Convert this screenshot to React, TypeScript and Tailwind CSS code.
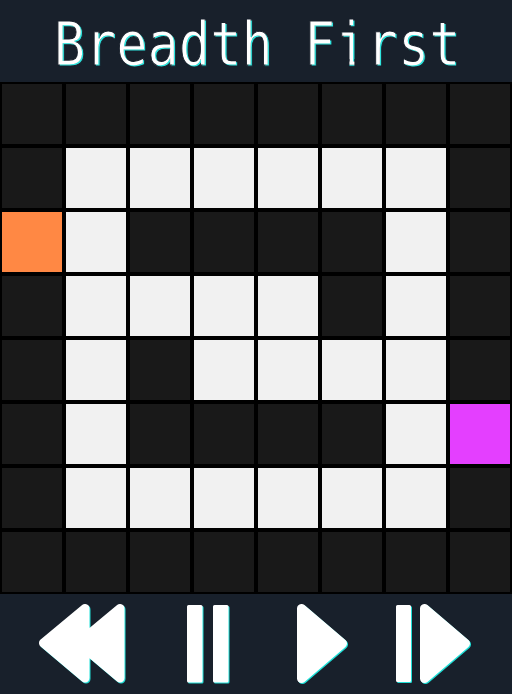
import React from "react";

const MAZE = [
  "########",
  "#......#",
  "S.####.#",
  "#....#.#",
  "#.#....#",
  "#.####.E",
  "#......#",
  "########",
];

const CELL_COLORS: Record<string, string> = {
  "#": "bg-[#191919]",
  ".": "bg-[#f1f1f1]",
  S: "bg-[#ff8844]",
  E: "bg-[#e43fff]",
};

const GLOW = "[filter:drop-shadow(1px_1px_0.5px_#1fe0d8)]";

// Thin cyan lettering with a white copy one pixel up and to the left.
const GLYPHS =
  "relative inline-block text-[#2fe6e0] after:absolute after:-top-px after:-left-[1.5px] after:text-white after:mix-blend-lighten after:content-[attr(data-text)]";

function Title() {
  return (
    <header className="flex h-[82px] items-center justify-center overflow-hidden">
      <h1 className="flex scale-x-[0.852] whitespace-pre pt-[8px] pl-[5px] font-['DejaVu_Sans_Mono',monospace] text-[61px] leading-[70px] [-webkit-text-stroke:1.1px_#18202b]">
        <span className={GLYPHS} data-text="Breadth F">Breadth F</span>
        <span
          className={`${GLYPHS} [clip-path:polygon(0_0,100%_0,100%_70%,57%_70%,57%_100%,41%_100%,41%_70%,0_70%)]`}
          data-text="i"
        >
          i
        </span>
        <span className={GLYPHS} data-text="rst">rst</span>
      </h1>
    </header>
  );
}

function Icon({ width, label, children }: { width: number; label: string; children: React.ReactNode }) {
  return (
    <button aria-label={label} className="block shrink-0">
      <svg
        width={width}
        height={80}
        viewBox={`0 0 ${width} 80`}
        className={`overflow-visible ${GLOW}`}
        fill="white"
        stroke="white"
        strokeLinejoin="round"
      >
        {children}
      </svg>
    </button>
  );
}

export default function App() {
  return (
    <main className="h-[694px] w-[512px] overflow-hidden bg-[#18202b]">
      <Title />
      <section className="grid grid-cols-8 bg-black">
        {MAZE.flatMap((row, y) =>
          row.split("").map((cell, x) => (
            <div key={`${x}-${y}`} className={`size-16 border-2 border-black ${CELL_COLORS[cell]}`} />
          )),
        )}
      </section>
      <footer className="flex pt-[10px] pl-[39px]">
        <Icon width={86} label="Rewind">
          <path strokeWidth={9} d="M46 4.5V74L4.5 39ZM81 4.5V74L39.5 39Z" />
        </Icon>
        <div className="ml-[62px]">
          <Icon width={42} label="Pause">
            <path strokeWidth={3} d="M1.5 2.5H14V77H1.5ZM27.5 2.5H40V77H27.5Z" />
          </Icon>
        </div>
        <div className="ml-[68px]">
          <Icon width={50} label="Play">
            <path strokeWidth={9} d="M4.5 4.5V74.5L45.5 39.5Z" />
          </Icon>
        </div>
        <div className="ml-[49px]">
          <Icon width={75} label="Step">
            <path strokeWidth={3} d="M1.5 2.5H13.5V76.5H1.5Z" />
            <path strokeWidth={9} d="M28.5 4.5V74.5L69.5 39.5Z" />
          </Icon>
        </div>
      </footer>
    </main>
  );
}
